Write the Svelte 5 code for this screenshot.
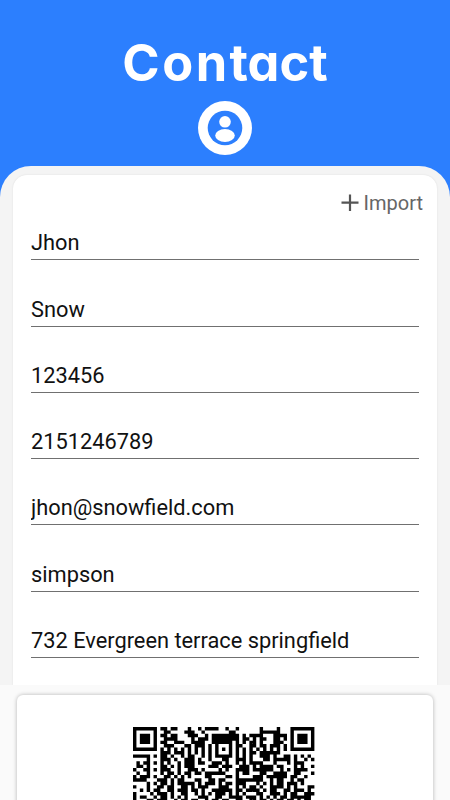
<script lang="ts">
  let fields = $state([
    { name: 'firstName', value: 'Jhon' },
    { name: 'lastName', value: 'Snow' },
    { name: 'phone', value: '123456' },
    { name: 'mobile', value: '2151246789' },
    { name: 'email', value: 'jhon@snowfield.com' },
    { name: 'company', value: 'simpson' },
    { name: 'address', value: '732 Evergreen terrace springfield' }
  ]);

  // one string per row of modules, 53 modules wide
  const rows = [
    '#######.##.##...#..#.####..#..#......#....#...#######',
    '#.....#..##....###..#.......##.......######...#.....#',
    '#.###.#.##.##...###..#.########.#.####...####.#.###.#',
    '#.###.#..####....#.###.########.##.#.##..##.#.#.###.#',
    '#.###.#.##..###..####..######.#.#.##.#...###..#.###.#',
    '#.....#..###...##.###.#.#...#.##..##.##.###.#.#.....#',
    '#######.#.#.#.#.#.#.#.#.#.#.#.#.#.#.#.#.#.#.#.#######',
    '........###.###.#.#.#.#.#...#.#.#.##.######..........',
    '#####.#.##.#..#.##..#.#.#####.#.#.#..###.#..##.#.#.#.',
    '....#...###.#..###.#..#...##..###.#...##.#####.#..#.#',
    '.#.##.#.#.#..#.###.##..###.#..#.#.####...#...#.###...',
    '.##.#...##.#.#.###....###.###..###.#.####.##...#.#..#',
    '#..##.#.###..#..###.#....#.#..####.######..#.#.####..',
    '.#..#...#.##.#.##.##.######...#.##...##..####..##...#',
    '#.###.#..##.#.#.#....##....##.#....###.######.##..#..',
    '####...###.#.##...##..##.##...########..#.##..#.##...',
    '....#.#.##.#.#####.#.###.#.##.###...#.#.#.##.###.#...',
    '#...#..##.##..##.#.###...###..#.#.##.#..####.#.#...##',
    '..#.#.##..##.###.##.#..######.##.####.#.##..##.###.#.',
    '#....#.###.#..##..#.#.#.###.#.#.#...##..###.#.##..###',
    '#.##..#.##.#.#.#...###..##..####.###.#.#.#.##.######.',
    '#...##.###..#.##.##..#.##.##..##..##.##.#.##.##.#.##.'
  ];

  const modules = rows
    .map((row, y) => [...row].map((c, x) => (c === '#' ? `M${x} ${y}h1v1h-1z` : '')).join(''))
    .join('');
</script>

<div class="screen">
  <header>
    <h1><span class="loose">Con</span><span>tact</span></h1>
    <svg class="avatar" viewBox="0 0 54 54">
      <circle cx="27" cy="27" r="27" fill="#fff" />
      <circle cx="27" cy="27" r="17.3" fill="#2c7ffe" />
      <circle cx="27" cy="20.8" r="5.8" fill="#fff" />
      <ellipse cx="27" cy="34.5" rx="9.8" ry="6.4" fill="#fff" />
    </svg>
  </header>

  <main>
    <form class="card">
      <button type="button" class="import">
        <svg viewBox="0 0 18 18"><path d="M9 .5v16.5M.5 8.7h17" /></svg>
        <span>Import</span>
      </button>
      {#each fields as field (field.name)}
        <input type="text" name={field.name} bind:value={field.value} spellcheck="false" />
      {/each}
    </form>
  </main>

  <footer>
    <div class="preview">
      <svg class="qr" viewBox="0 0 53 22"><path d={modules} /></svg>
    </div>
  </footer>
</div>

<style>
  :global(body) {
    overflow: hidden;
  }

  .screen {
    display: flex;
    flex-direction: column;
    height: 800px;
    overflow: hidden;
    background: #2c7ffe;
    font-family: Roboto, sans-serif;
  }

  header {
    display: flex;
    flex-direction: column;
    align-items: center;
    flex: none;
    height: 166px;
  }

  h1 {
    margin: 33px 0 8px;
    color: #fff;
    font-family: Inter, sans-serif;
    font-size: 50.5px;
    font-weight: 700;
    line-height: 60px;
    font-feature-settings: 'cv11';
  }

  .loose {
    letter-spacing: 2.5px;
  }

  .avatar {
    width: 54px;
    height: 54px;
  }

  main {
    flex: none;
    box-sizing: border-box;
    height: 519px;
    padding: 9px 13px 0;
    border-radius: 31px 31px 0 0;
    background: #f4f4f4;
  }

  .card {
    display: flex;
    flex-direction: column;
    box-sizing: border-box;
    height: 510px;
    padding: 14px 18px 0;
    border-radius: 14px 14px 0 0;
    background: #fff;
    box-shadow: 0 0 2px rgba(0, 0, 0, 0.1);
  }

  .import {
    display: flex;
    align-items: center;
    align-self: flex-end;
    flex: none;
    gap: 5px;
    height: 28px;
    margin-right: -4px;
    padding: 0;
    border: 0;
    background: none;
    color: #666;
    font: 20px/28px Roboto, sans-serif;
  }

  .import svg {
    width: 18px;
    height: 18px;
    fill: none;
    stroke: #555;
    stroke-width: 2.2;
  }

  input {
    flex: none;
    box-sizing: border-box;
    width: 388px;
    height: 34px;
    margin: 9.3px 0 23px;
    padding: 0;
    border: 0;
    border-bottom: 1px solid #707070;
    outline: 0;
    background: none;
    color: #111;
    font: 21.8px/33px Roboto, sans-serif;
  }

  footer {
    flex: 1;
    padding: 10px 17px 0;
    background: #fafafa;
  }

  .preview {
    display: flex;
    justify-content: center;
    height: 120px;
    padding-top: 32px;
    border-radius: 6px;
    background: #fff;
    box-shadow: 0 0 4px rgba(0, 0, 0, 0.28);
  }

  .qr {
    width: 181.4px;
    height: 75.3px;
    margin-right: 2px;
  }
</style>
